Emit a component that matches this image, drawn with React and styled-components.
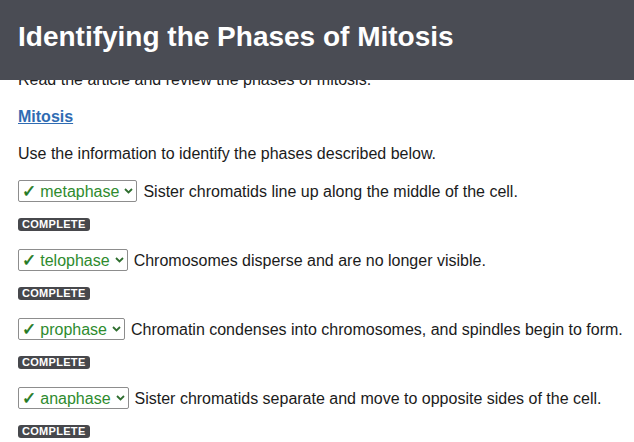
import styled, { createGlobalStyle } from "styled-components";

const GlobalStyle = createGlobalStyle`
  body {
    margin: 0;
    background: #ffffff;
    font-family: "Liberation Sans", Arial, sans-serif;
    color: #1b1b1b;
  }
`;

const Header = styled.header`
  position: fixed;
  top: 0;
  left: 0;
  right: 0;
  height: 80px;
  background-color: #4a4c54;
  display: flex;
  align-items: center;
  padding: 0 18px;
  z-index: 10;
  h1 {
    margin: 0;
    color: #ffffff;
    font-size: 28px;
    font-weight: 700;
    line-height: 32px;
    padding-bottom: 6px;
  }
`;

const Page = styled.main`
  padding: 53px 18px 0;
`;

const Para = styled.p`
  margin: 16px 0;
  font-size: 16px;
  line-height: 21px;
`;

const Link = styled.a`
  color: #2f6cb3;
  font-weight: 700;
  text-decoration: underline;
`;

const Question = styled.div`
  margin-bottom: 18px;
`;

const Row = styled.div`
  display: flex;
  align-items: center;
  gap: 6px;
  height: 22px;
  font-size: 16px;
  line-height: 21px;
  white-space: nowrap;
`;

const Select = styled.span`
  display: inline-flex;
  align-items: center;
  box-sizing: border-box;
  height: 22px;
  padding: 0 3px 0 3px;
  border: 1px solid #8d8d8d;
  border-radius: 2px;
  color: #2e8b2e;
  font-size: 16px;
  .check {
    font-family: "DejaVu Sans", sans-serif;
    font-weight: 700;
    font-size: 17px;
    line-height: 1;
    color: #1f7a1f;
    margin-right: 4px;
    -webkit-text-stroke: 0.6px #1f7a1f;
  }
  svg {
    margin-left: 5px;
  }
`;

const Badge = styled.div`
  width: fit-content;
  margin-top: 16px;
  padding: 0 4px;
  height: 13px;
  line-height: 13px;
  border-radius: 3px;
  background-color: #47484c;
  color: #ffffff;
  font-size: 11px;
  font-weight: 700;
  letter-spacing: 0.3px;
`;

const Chevron = () => (
  <svg width="9" height="6" viewBox="0 0 9 6">
    <path d="M1 1 L4.5 4.5 L8 1" fill="none" stroke="#2f6e2f" strokeWidth="1.8" />
  </svg>
);

const questions = [
  { answer: "metaphase", text: "Sister chromatids line up along the middle of the cell." },
  { answer: "telophase", text: "Chromosomes disperse and are no longer visible." },
  { answer: "prophase", text: "Chromatin condenses into chromosomes, and spindles begin to form." },
  { answer: "anaphase", text: "Sister chromatids separate and move to opposite sides of the cell." },
];

export default function App() {
  return (
    <>
      <GlobalStyle />
      <Header>
        <h1>Identifying the Phases of Mitosis</h1>
      </Header>
      <Page>
        <Para>Read the article and review the phases of mitosis.</Para>
        <Para>
          <Link href="#">Mitosis</Link>
        </Para>
        <Para>Use the information to identify the phases described below.</Para>
        {questions.map((q) => (
          <Question key={q.answer}>
            <Row>
              <Select>
                <span className="check">✓</span>
                {q.answer}
                <Chevron />
              </Select>
              <span>{q.text}</span>
            </Row>
            <Badge>COMPLETE</Badge>
          </Question>
        ))}
      </Page>
    </>
  );
}
